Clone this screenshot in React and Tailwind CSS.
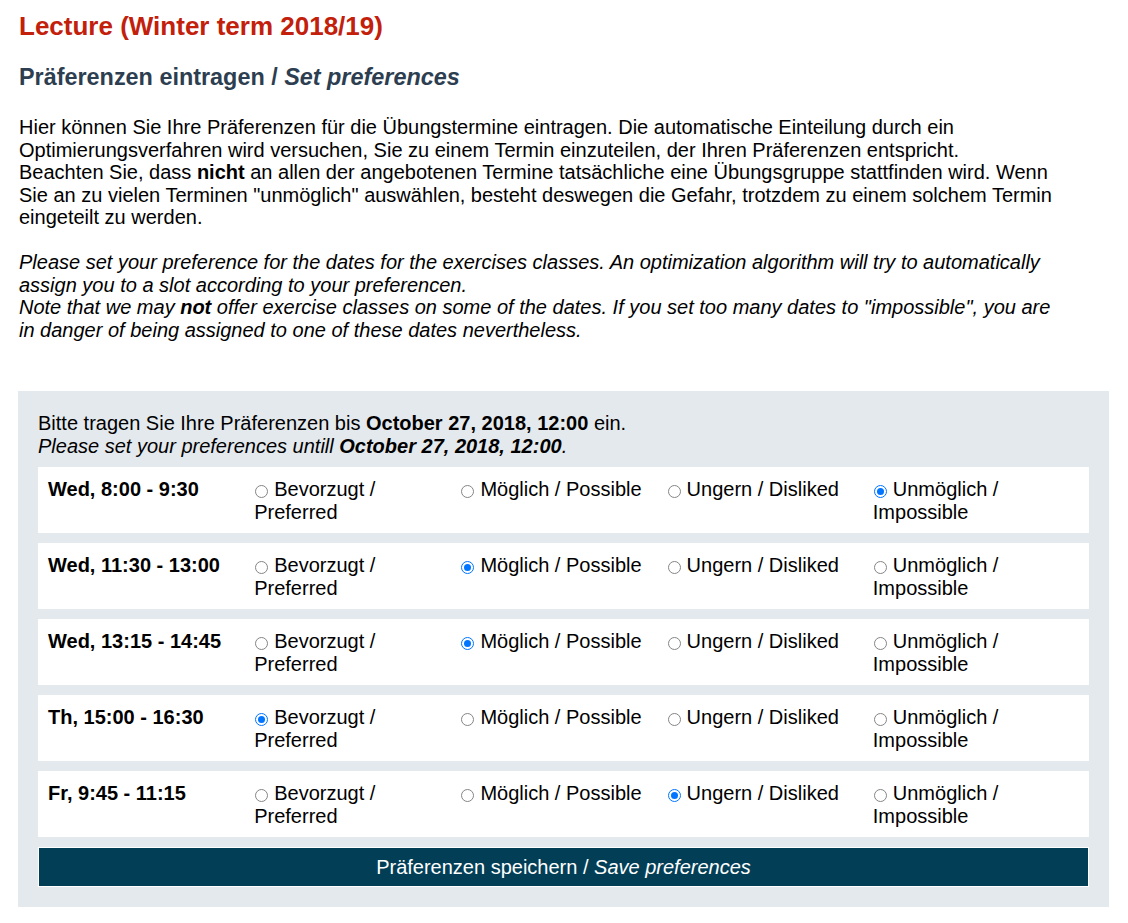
const slots = [
  { label: "Wed, 8:00 - 9:30", value: 3 },
  { label: "Wed, 11:30 - 13:00", value: 1 },
  { label: "Wed, 13:15 - 14:45", value: 1 },
  { label: "Th, 15:00 - 16:30", value: 0 },
  { label: "Fr, 9:45 - 11:15", value: 2 },
];

const options = [
  "Bevorzugt / Preferred",
  "Möglich / Possible",
  "Ungern / Disliked",
  "Unmöglich / Impossible",
];

function Radio({ checked }) {
  return checked ? (
    <span className="inline-block w-[13px] h-[13px] rounded-full border border-[#0075ff] bg-white mr-[6px] ml-px align-[-2px] relative">
      <span className="absolute inset-[2px] rounded-full bg-[#0075ff]" />
    </span>
  ) : (
    <span className="inline-block w-[13px] h-[13px] rounded-full border border-[#858585] bg-white mr-[6px] ml-px align-[-2px]" />
  );
}

function SlotRow({ slot }) {
  return (
    <div className="grid grid-cols-5 bg-white px-[10px] pt-[11px] pb-[9px] leading-[23px]">
      <div className="font-bold">{slot.label}</div>
      {options.map((opt, i) => (
        <label key={opt} className="pr-[4px]">
          <Radio checked={slot.value === i} />
          {opt}
        </label>
      ))}
    </div>
  );
}

export default function App() {
  return (
    <div
      className="bg-white text-black text-[20px] leading-[22.5px] px-[19px] pt-[11px] pb-[16px]"
      style={{ fontFamily: '"Liberation Sans", Arial, sans-serif' }}
    >
      <h1 className="text-[26px] leading-[30px] font-bold text-[#c3200c]">
        Lecture (Winter term 2018/19)
      </h1>
      <h3 className="mt-[22px] text-[23.4px] leading-[28px] font-bold text-[#2c3e50]">
        Präferenzen eintragen / <i>Set preferences</i>
      </h3>

      <p className="mt-[25px] w-[1042px]">
        Hier können Sie Ihre Präferenzen für die Übungstermine eintragen. Die
        automatische Einteilung durch ein Optimierungsverfahren wird versuchen,
        Sie zu einem Termin einzuteilen, der Ihren Präferenzen entspricht.
        <br />
        Beachten Sie, dass <b>nicht</b> an allen der angebotenen Termine
        tatsächliche eine Übungsgruppe stattfinden wird. Wenn Sie an zu vielen
        Terminen "unmöglich" auswählen, besteht deswegen die Gefahr, trotzdem zu
        einem solchem Termin eingeteilt zu werden.
      </p>
      <p className="mt-[22.5px] w-[1042px] italic">
        Please set your preference for the dates for the exercises classes. An
        optimization algorithm will try to automatically assign you to a slot
        according to your preferencen.
        <br />
        Note that we may <b>not</b> offer exercise classes on some of the
        dates. If you set too many dates to "impossible", you are in danger of
        being assigned to one of these dates nevertheless.
      </p>

      <form className="-ml-px mt-[50px] w-[1091px] bg-[#e4e9ed] px-[20px] pt-[21px] pb-[20px]">
        <div className="mb-[10px]">
          Bitte tragen Sie Ihre Präferenzen bis <b>October 27, 2018, 12:00</b>{" "}
          ein.
          <br />
          <i>
            Please set your preferences untill <b>October 27, 2018, 12:00</b>.
          </i>
        </div>
        <div className="flex flex-col gap-[10px]">
          {slots.map((s) => (
            <SlotRow key={s.label} slot={s} />
          ))}
        </div>
        <button
          type="button"
          className="mt-[10px] w-full h-[40px] bg-[#023f57] border border-white text-white text-[20px]"
        >
          Präferenzen speichern / <i>Save preferences</i>
        </button>
      </form>
    </div>
  );
}
